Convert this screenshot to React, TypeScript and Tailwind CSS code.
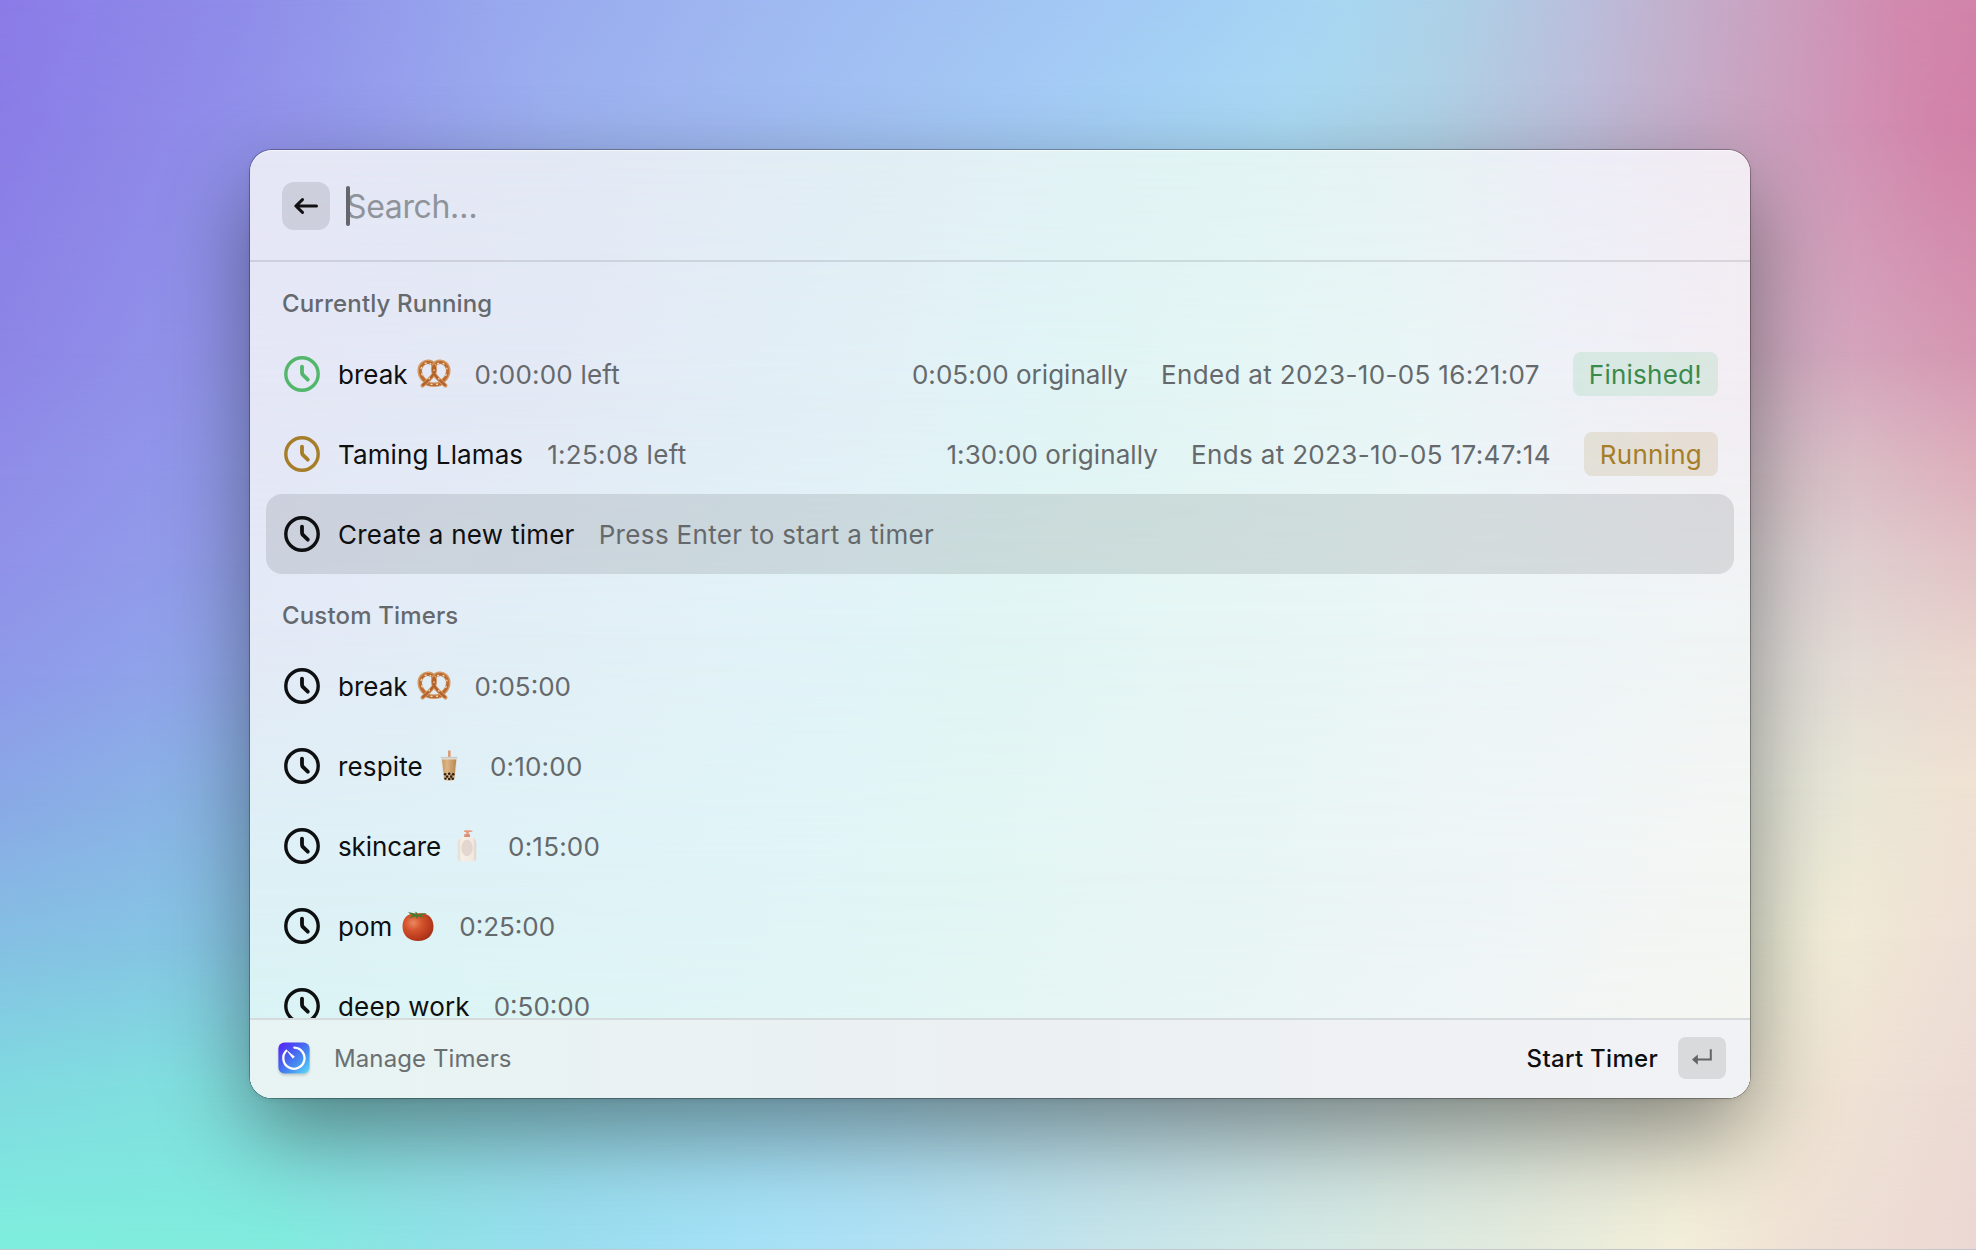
import type { ReactNode } from "react";

type MeshRow = { y: number; stops: [string, number][] };

const wallpaper: MeshRow[] = [
  { y: 0, stops: [["#8b7ce8", 0], ["#8f8de9", 12.5], ["#98a8ee", 25], ["#9fb8f1", 38], ["#a2c5f4", 51], ["#a4cef5", 60], ["#a8d7f2", 68], ["#aed0e6", 74], ["#babfdd", 80], ["#c2b1cd", 84.5], ["#cb9fbf", 90], ["#d28aaf", 96], ["#d283a9", 100]] },
  { y: 10, stops: [["#8a7de6", 0], ["#9190ea", 12.5], ["#9cb0ef", 28], ["#a1bef2", 41], ["#a4cdf5", 54], ["#a9d9f3", 65], ["#aed2e6", 72], ["#bcbcd8", 80], ["#c9a4c1", 88], ["#d191b4", 94], ["#d284aa", 98], ["#d281a8", 100]] },
  { y: 28, stops: [["#8d85e6", 0], ["#9193ea", 10], ["#9ab0ee", 25], ["#a8d8f3", 60], ["#cbaec2", 88], ["#d4a3bb", 94], ["#d596b1", 100]] },
  { y: 38, stops: [["#8f8de8", 0], ["#9299ea", 10], ["#9ab8ee", 25], ["#a8d8f3", 60], ["#d3c3ca", 88], ["#dabfc6", 94], ["#deb0bd", 100]] },
  { y: 45, stops: [["#9092e9", 0], ["#929dea", 10], ["#9abaee", 25], ["#aadaf1", 60], ["#d6d1d3", 88], ["#dfcecf", 94], ["#e2c3c6", 100]] },
  { y: 54, stops: [["#8e9ae9", 0], ["#90a6ea", 10], ["#9abfee", 25], ["#b0dcef", 60], ["#dddcd8", 88], ["#e4dcd5", 94], ["#ebd8cf", 100]] },
  { y: 63, stops: [["#8aa7e6", 0], ["#8bb4e6", 10], ["#96c6ee", 25], ["#b4dfee", 60], ["#e2e5da", 88], ["#e9e6d6", 94], ["#efe2d3", 100]] },
  { y: 75, stops: [["#85bfe3", 0], ["#86c5e4", 10], ["#96d2ee", 25], ["#b4e0ee", 60], ["#e7ead7", 88], ["#f1edd7", 92], ["#efe5d5", 96], ["#eedfd5", 100]] },
  { y: 87, stops: [["#80dae0", 0], ["#81e0df", 10], ["#93dfe8", 22], ["#a5dff4", 40], ["#c0dfe8", 60], ["#dce6dc", 77], ["#f0ead6", 88], ["#efe3d4", 93], ["#ecdad4", 100]] },
  { y: 100, stops: [["#7eefdd", 0], ["#80ebdd", 14], ["#8be3e3", 20], ["#98dcee", 28], ["#a5e0f6", 38], ["#b0e0f4", 45], ["#c3e3ea", 55], ["#d2e8e4", 66], ["#e4eadb", 78], ["#f2eed8", 85], ["#efe0d4", 91], ["#ebd7d3", 100]] },
];

const panel: MeshRow[] = [
  { y: 0, stops: [["#e6e7f6", 0], ["#e4e9f5", 20], ["#e2eff5", 42], ["#e2f3f5", 56], ["#e2f5f4", 66], ["#e9f2f5", 80], ["#eeeef7", 89], ["#f3ebf3", 100]] },
  { y: 25, stops: [["#e5e7f6", 0], ["#e3e9f5", 18], ["#e2eff6", 38], ["#e1f4f6", 52], ["#e2f5f4", 60], ["#e9f5f6", 78], ["#eff0f6", 90], ["#f3edf3", 100]] },
  { y: 50, stops: [["#e4e9f6", 0], ["#e2eef6", 17], ["#e1f3f8", 38], ["#e1f5f4", 50], ["#e6f6f5", 66], ["#edf5f7", 84], ["#f0f4f4", 100]] },
  { y: 75, stops: [["#def0f6", 0], ["#dff2f7", 17], ["#e1f5f7", 38], ["#e2f6f4", 48], ["#e8f5f5", 66], ["#eff5f7", 84], ["#f4f6f3", 100]] },
  { y: 100, stops: [["#d8f5f5", 0], ["#dcf6f4", 17], ["#e2f5f5", 40], ["#e6f6f3", 57], ["#eef5f7", 76], ["#f4f6f2", 92], ["#f5f6f0", 100]] },
];

/** Smooth two-dimensional colour mesh: horizontal gradients cross-faded vertically. */
function ColorMesh({ rows }: { rows: MeshRow[] }) {
  return (
    <div className="absolute inset-0 isolate" aria-hidden>
      {rows.map((row, i) => {
        const fade = i === 0 ? undefined : `linear-gradient(to bottom, transparent ${rows[i - 1].y}%, black ${row.y}%)`;
        return (
          <div
            key={row.y}
            className="absolute inset-0"
            style={{
              backgroundImage: `linear-gradient(to right, ${row.stops.map(([c, p]) => `${c} ${p}%`).join(", ")})`,
              maskImage: fade,
            }}
          />
        );
      })}
    </div>
  );
}

function ClockIcon({ className }: { className: string }) {
  return (
    <svg viewBox="0 0 40 40" className={`size-10 shrink-0 ${className}`} fill="none" stroke="currentColor" strokeLinecap="round" strokeLinejoin="round">
      <circle cx="20" cy="20" r="16.2" strokeWidth="3.4" />
      <path d="M20 12.6V18.6Q20 20 20.9 20.9L25.8 25.7" strokeWidth="3.8" />
    </svg>
  );
}

function Pretzel() {
  return (
    <svg viewBox="0 0 34 34" className="h-[34px] w-[34px]" fill="none" strokeLinecap="round" strokeLinejoin="round">
      <g stroke="#d29a64" strokeWidth="4.6">
        <path d="M17 8.500C15 4.200 9 3.600 5.500 7C.9 11.500 2.200 20 9 24.500" />
        <path d="M17 8.500C19 4.200 25 3.600 28.500 7C33.100 11.500 31.800 20 25 24.500" />
        <path d="M9 25.500C12 28.300 22 28.300 25 25.500" />
      </g>
      <g stroke="#bb6a32" strokeWidth="2.600">
        <path d="M17 8.900C15 4.800 9 4.200 5.900 7.400C1.500 11.900 2.800 20 9 24.500" />
        <path d="M17 8.900C19 4.800 25 4.200 28.100 7.400C32.500 11.900 31.200 20 25 24.500" />
        <path d="M9 25.900C12 28.300 22 28.300 25 25.900" />
      </g>
      <path d="M17.400 8.500C19.500 14.500 17.500 18.500 5.500 28.500M16.600 8.500C14.500 14.500 16.500 18.500 28.500 28.500" stroke="#d29a64" strokeWidth="4.200" />
      <path d="M17.400 9C19.200 14.500 17.200 18.500 6 28M16.600 9C14.800 14.500 16.800 18.500 28 28" stroke="#b4602a" strokeWidth="2.400" />
      <path d="M4 11.500L4.600 10.300M8 6.400L9.200 6.100M13.200 6.600L13.800 7M20.600 6.800L21.600 6.200M26 6.300L27 7M29.800 11L30 12M4.600 17L5.200 18M29.200 17.600L28.800 18.400M12 21.800L12.600 21.200M21.600 21.600L22.200 22.200M14 27.300L15 27.400M19.500 27.300L20.500 27.200M17 12.800V13.400" stroke="#f6e4cc" strokeWidth="1.200" />
    </svg>
  );
}

function BubbleTea() {
  return (
    <svg viewBox="0 0 34 34" className="h-[34px] w-[34px]">
      <defs>
        <linearGradient id="tea" x1="0" x2="1">
          <stop offset="0" stopColor="#c79a67" />
          <stop offset=".35" stopColor="#ddb583" />
          <stop offset="1" stopColor="#b78752" />
        </linearGradient>
      </defs>
      <path d="M16 1.5h2.6v8H16z" fill="#dc9c78" />
      <path d="M9 8.2h16.4l-.3 1.6-2 19.4q-.3 2.6-3 2.6h-5.6q-2.700 0-3-2.6L9.300 9.800z" fill="#e3ddd2" />
      <path d="M10 10.4h14.300l-1.900 18.600q-.2 2.200-2.600 2.200h-5.200q-2.400 0-2.600-2.200z" fill="url(#tea)" />
      <path d="M8.800 7.800h16.700v1.500H8.800z" fill="#c9cfcd" />
      <g fill="#2c2018">
        <circle cx="13.200" cy="25.200" r="1.300" />
        <circle cx="17.200" cy="24.800" r="1.300" />
        <circle cx="21.200" cy="25.200" r="1.300" />
        <circle cx="15.200" cy="27.600" r="1.300" />
        <circle cx="19.200" cy="27.600" r="1.300" />
        <circle cx="13.400" cy="29.600" r="1.200" />
        <circle cx="17.200" cy="30" r="1.300" />
        <circle cx="20.800" cy="29.700" r="1.200" />
      </g>
      <g fill="#ecd9b8">
        <circle cx="15.200" cy="25.600" r=".6" />
        <circle cx="17.200" cy="27.600" r=".6" />
        <circle cx="21.200" cy="27.600" r=".6" />
        <circle cx="15.400" cy="29.900" r=".6" />
      </g>
    </svg>
  );
}

function Lotion() {
  return (
    <svg viewBox="0 0 34 34" className="h-[34px] w-[34px]">
      <defs>
        <linearGradient id="lotion" x1="0" x2="1">
          <stop offset="0" stopColor="#e3d9ce" />
          <stop offset=".2" stopColor="#f5efe7" />
          <stop offset=".8" stopColor="#f2eae1" />
          <stop offset="1" stopColor="#ddd2c6" />
        </linearGradient>
      </defs>
      <path d="M15.200 1.200h4l3.300.5-.2 1-3.500.6v2.200h-2.600V3.300l-2.400-.5q0-1.600 1.400-1.600z" fill="#e79a80" />
      <path d="M14.200 5.200h5.800v3h-5.800z" fill="#dd8c72" />
      <path d="M12.500 8h9q4.700 1 4.700 6v14.500q0 4-4 4H11.800q-4 0-4-4V14q0-5 4.700-6z" fill="url(#lotion)" />
      <ellipse cx="17" cy="19" rx="5.700" ry="8.300" fill="#e2d6ce" />
    </svg>
  );
}

function Tomato() {
  return (
    <svg viewBox="0 0 34 34" className="h-[34px] w-[34px]">
      <defs>
        <radialGradient id="tomato" cx=".35" cy=".35" r=".75">
          <stop offset="0" stopColor="#ea8a60" />
          <stop offset=".35" stopColor="#d5552f" />
          <stop offset=".75" stopColor="#b93a1c" />
          <stop offset="1" stopColor="#9d2e15" />
        </radialGradient>
      </defs>
      <path d="M17 4.500C8 3 1.500 8.500 1.500 17.500S8 32 17 32s15.500-5.500 15.500-14.500S26 3 17 4.500z" fill="url(#tomato)" />
      <path d="M7 3q5 .6 9 2.700Q15 3.700 13.600 2.400q2.600.6 3.800 3 4-1.700 8.600-1-3.500.8-5.700 2.100l3.500 2.200q-3.800-.3-6.300-1.500l-1.500 2.800-1.300-2.600q-3.500 1.500-6.700 1.300 2.200-.8 3.700-2.200-2.500-1-4.700-3.500z" fill="#4c7a2c" />
    </svg>
  );
}

function BackArrow() {
  return (
    <svg viewBox="0 0 48 48" className="size-12" fill="none" stroke="#111" strokeWidth="3" strokeLinecap="round" strokeLinejoin="round">
      <path d="M34.500 24H14M20.500 17.600L13.800 24L20.500 30.400" />
    </svg>
  );
}

function AppIcon() {
  return (
    <svg viewBox="0 0 32 32" className="size-8 drop-shadow-[0_2px_1px_rgba(0,0,0,0.16)]" fill="none">
      <defs>
        <linearGradient id="app" x1="0" y1="0" x2="1" y2="1">
          <stop offset="0" stopColor="#5a1cf8" />
          <stop offset=".3" stopColor="#4b50f2" />
          <stop offset=".65" stopColor="#4591f0" />
          <stop offset="1" stopColor="#62e0f8" />
        </linearGradient>
      </defs>
      <rect x=".4" y=".4" width="31.200" height="31.200" rx="6" fill="url(#app)" />
      <path d="M16.300 5.600A10.600 10.600 0 1 1 8.300 8.800" stroke="#fff" strokeWidth="2.300" strokeLinecap="round" />
      <path d="M9.600 9.200L16.400 14.700L14.800 16.200Z" fill="#fff" stroke="#fff" strokeWidth=".8" strokeLinejoin="round" />
    </svg>
  );
}

function EnterGlyph() {
  return (
    <svg viewBox="0 0 48 42" className="h-[42px] w-12" fill="none">
      <path d="M32.800 12.200V22.600H18" stroke="#636465" strokeWidth="2" />
      <path d="M14 22.600L19.800 17.400V27.800Z" fill="#636465" />
    </svg>
  );
}

function Row({ icon = "text-[#0e0f10]", title, titleClass = "", emoji, detail, detailClass = "", selected, children }: {
  icon?: string;
  title: string;
  titleClass?: string;
  emoji?: ReactNode;
  detail: string;
  detailClass?: string;
  selected?: boolean;
  children?: ReactNode;
}) {
  return (
    <li className={`flex h-20 shrink-0 items-center rounded-[16px] px-4 text-[26px] ${selected ? "bg-black/10" : ""}`}>
      <ClockIcon className={icon} />
      <span className={`ml-4 flex items-center whitespace-pre text-[#0e0f10] ${titleClass}`}>
        {title}
        {emoji && <span className="ml-[9px] shrink-0">{emoji}</span>}
      </span>
      <span className={`ml-6 whitespace-pre text-[#65696c] ${detailClass}`}>{detail}</span>
      <div className="ml-auto flex items-center gap-[33px] whitespace-pre text-[#65696c]">{children}</div>
    </li>
  );
}

function SectionTitle({ children }: { children: string }) {
  return (
    <h2 className="flex h-[72px] shrink-0 items-center px-4 pt-3 text-[24px] font-medium tracking-[0.15px] text-[#65696e]">{children}</h2>
  );
}

export default function App() {
  return (
    <main className="relative h-[1250px] w-[1976px] overflow-hidden pt-[150px] pl-[250px] font-['Inter',sans-serif]">
      <ColorMesh rows={wallpaper} />
      <div className="absolute inset-x-0 bottom-0 h-px bg-[#c3c6ca]" />
      <section className="relative isolate flex h-[948px] w-[1500px] flex-col rounded-[22px] shadow-[0_0_0_1px_rgba(0,0,0,0.28),0_36px_90px_rgba(0,0,0,0.42),0_2px_6px_rgba(0,0,0,0.08)]">
        <div className="absolute inset-0 -z-10 overflow-hidden rounded-[22px]">
          <ColorMesh rows={panel} />
        </div>
        <header className="flex h-28 shrink-0 items-center rounded-t-[22px] border-b-2 border-black/10 px-8 pt-0.5 shadow-[inset_0_1px_0_rgba(255,255,255,0.6)]">
          <button className="size-12 rounded-[12px] bg-black/10" aria-label="Back">
            <BackArrow />
          </button>
          <div className="relative ml-4 flex items-center">
            <span className="pt-0.5 text-[32px] tracking-[-0.36px] text-[#8f949b]">Search…</span>
            <span className="absolute top-1/2 left-0 h-10 w-1 -translate-y-1/2 rounded-[2px] bg-[#64666c]" />
          </div>
        </header>
        <ul className="flex min-h-0 flex-1 flex-col overflow-hidden px-4">
          <SectionTitle>Currently Running</SectionTitle>
          <Row icon="text-[#53b76b]" title="break" emoji={<Pretzel />} detail="0:00:00 left" detailClass="tracking-[0.2px]">
            <span className="tracking-[0.04px]">0:05:00 originally</span>
            <span className="tracking-[0.35px]">Ended at 2023-10-05 16:21:07</span>
            <span className="flex h-11 items-center rounded-[8px] bg-[#35b35a]/12 px-4 tracking-[0.25px] text-[#3b8a4d]">Finished!</span>
          </Row>
          <Row icon="text-[#a67d28]" title="Taming Llamas" titleClass="tracking-[0.1px]" detail="1:25:08 left" detailClass="tracking-[0.3px]">
            <span className="tracking-[0.1px]">1:30:00 originally</span>
            <span className="tracking-[0.35px]">Ends at 2023-10-05 17:47:14</span>
            <span className="flex h-11 items-center rounded-[8px] bg-[#a67d28]/15 px-4 tracking-[0.25px] text-[#a67d28]">Running</span>
          </Row>
          <Row
            title="Create a new timer"
            titleClass="tracking-[0.25px]"
            detail="Press Enter to start a timer"
            detailClass="tracking-[0.34px]"
            selected
          />
          <SectionTitle>Custom Timers</SectionTitle>
          <Row title="break" emoji={<Pretzel />} detail="0:05:00" />
          <Row title="respite" titleClass="tracking-[0.15px]" emoji={<BubbleTea />} detail="0:10:00" detailClass="tracking-[0.2px]" />
          <Row title="skincare" titleClass="tracking-[-0.1px]" emoji={<Lotion />} detail="0:15:00" detailClass="tracking-[0.2px]" />
          <Row title="pom" emoji={<Tomato />} detail="0:25:00" />
          <Row title="deep work" titleClass="tracking-[0.15px]" detail="0:50:00" />
        </ul>
        <footer className="flex h-20 shrink-0 items-center rounded-b-[22px] border-t-2 border-[#d5dadc] bg-linear-to-r from-[#e7f4f3] via-[#ecf0f2] to-[#f1f2f5] pr-6 pb-0.5 pl-7">
          <AppIcon />
          <span className="ml-6 pt-px text-[24px] tracking-[0.1px] text-[#6a6f71]">Manage Timers</span>
          <span className="ml-auto pt-px text-[24px] font-medium tracking-[0.3px] text-[#0e0f10]">Start Timer</span>
          <kbd className="ml-5 rounded-[8px] bg-[#d9dadc]">
            <EnterGlyph />
          </kbd>
        </footer>
      </section>
    </main>
  );
}
